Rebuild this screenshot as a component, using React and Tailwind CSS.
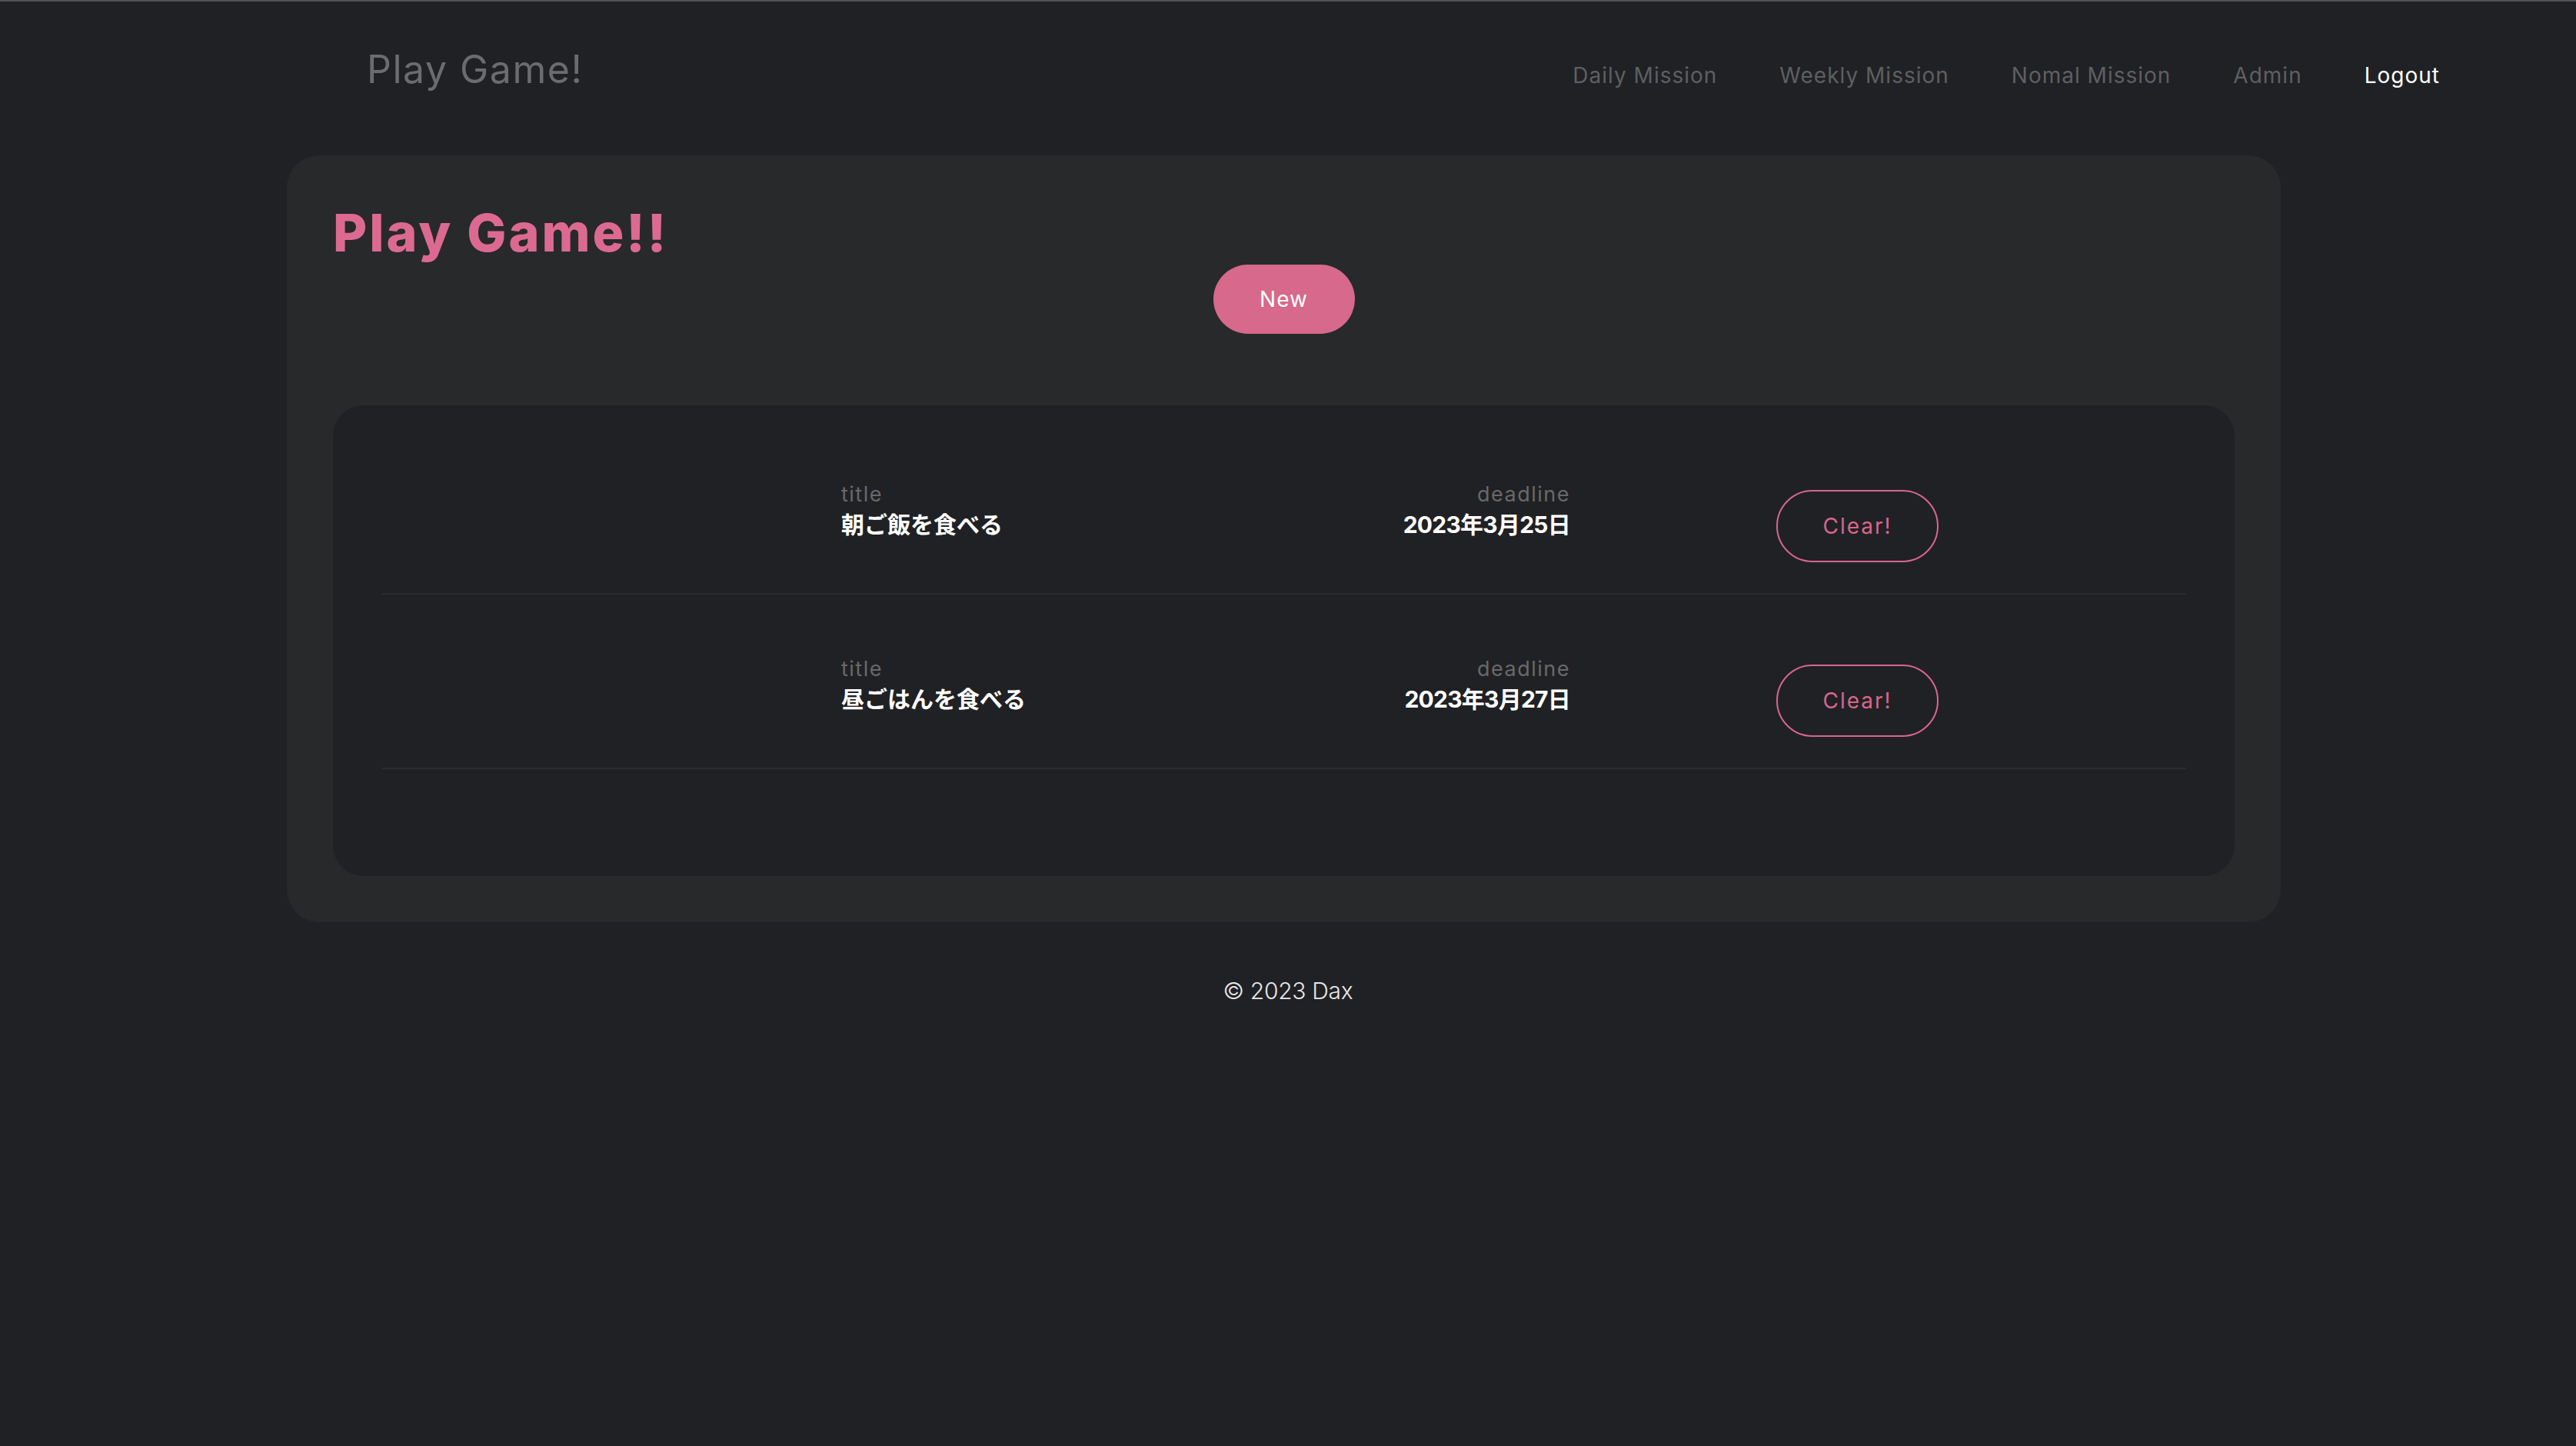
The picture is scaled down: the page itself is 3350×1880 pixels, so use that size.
import React from "react";

const missions = [
  { id: 1, title: "朝ご飯を食べる", deadline: "2023年3月25日" },
  { id: 2, title: "昼ごはんを食べる", deadline: "2023年3月27日" },
];

const navLinks = ["Daily Mission", "Weekly Mission", "Nomal Mission", "Admin"];

const MissionRow = ({ mission }) => (
  <div className="border-b-2 border-[#2b2c2f] pt-[83px] pb-[40px]">
    <div className="flex items-start pl-[598px]">
      <div className="flex w-[948px] justify-between">
        <div>
          <div className="text-[27px] leading-none tracking-[1.5px] text-[#68696c]">title</div>
          <div className="mt-[6px] text-[30px] font-bold leading-[40px] text-white">{mission.title}</div>
        </div>
        <div className="text-right">
          <div className="text-[27px] leading-none tracking-[1.5px] text-[#68696c]">deadline</div>
          <div className="mt-[6px] text-[30px] font-bold leading-[40px] tracking-[-0.75px] text-white">{mission.deadline}</div>
        </div>
      </div>
      <button className="ml-[268px] mt-[8px] h-[94px] w-[211px] rounded-full border-2 border-[#d9668d] text-[28px] tracking-[2px] text-[#d9668d]">
        Clear!
      </button>
    </div>
  </div>
);

export default function App() {
  return (
    <div className="min-h-screen border-t-2 border-[#505154] bg-[#202124] font-['Inter','Noto_Sans_CJK_JP',sans-serif]">
      <nav className="flex items-start justify-between pl-[477px] pr-[177px] pt-[63px]">
        <a className="text-[50px] leading-none tracking-[1.5px] text-[#6b6c6e]">Play Game!</a>
        <ul className="mt-[19px] flex gap-[81px] text-[28px] leading-none tracking-[1px]">
          {navLinks.map((link) => (
            <li key={link} className="text-[#5e5f62]">{link}</li>
          ))}
          <li className="text-white">Logout</li>
        </ul>
      </nav>

      <main className="ml-[373px] mt-[87px] w-[2593px] rounded-[42px] bg-[#28292b] p-[60px]">
        <h1 className="mt-[6px] text-[68px] font-extrabold leading-none tracking-[3px] text-[#dc6a90]">Play Game!!</h1>
        <button className="mx-auto mt-[8px] block h-[90px] w-[184px] rounded-full bg-[#d7698c] text-[28px] tracking-[1px] text-white">
          New
        </button>

        <div className="mt-[93px] rounded-[40px] bg-[#202124] px-[63px] pt-[19px] pb-[139px]">
          {missions.map((m) => (
            <MissionRow key={m.id} mission={m} />
          ))}
        </div>
      </main>

      <footer className="mt-[74px] text-center text-[30px] font-light leading-none tracking-[-0.3px] text-[#e8e8e8]">
        © 2023 Dax
      </footer>
    </div>
  );
}
